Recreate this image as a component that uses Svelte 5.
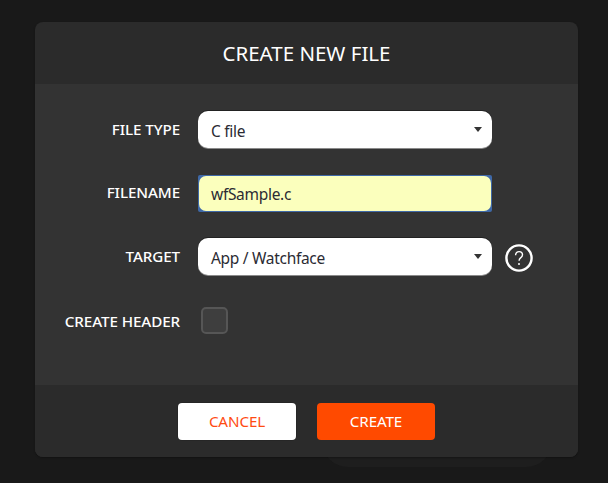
<script>
  const fileType = 'C file';
  const target = 'App / Watchface';
</script>

<div class="page">
  <div class="behind"></div>
  <div class="modal">
    <header class="head">CREATE NEW FILE</header>
    <div class="body">
      <div class="row">
        <span class="label">FILE TYPE</span>
        <div class="field select"><span>{fileType}</span><i class="caret"></i></div>
      </div>
      <div class="row">
        <span class="label">FILENAME</span>
        <div class="focus"><div class="field inner"><span>wfSample.c</span></div></div>
      </div>
      <div class="row">
        <span class="label">TARGET</span>
        <div class="field select"><span>{target}</span><i class="caret"></i></div>
        <svg class="help" width="28" height="28" viewBox="0 0 28 28" aria-hidden="true">
          <circle cx="14" cy="14" r="12.6" fill="none" stroke="#fff" stroke-width="2.4" />
          <path d="M10.6 11.2c0-2.2 1.5-3.6 3.5-3.6s3.4 1.3 3.4 3.2c0 1.5-.8 2.3-1.9 3.1-1 .8-1.5 1.4-1.5 2.8" fill="none" stroke="#fff" stroke-width="1.4" />
          <circle cx="14" cy="20" r="1" fill="#fff" />
        </svg>
      </div>
      <div class="row check-row">
        <span class="label">CREATE HEADER</span>
        <div class="check"></div>
      </div>
    </div>
    <footer class="foot">
      <button class="btn cancel">CANCEL</button>
      <button class="btn create">CREATE</button>
    </footer>
  </div>
</div>

<style>
  :global(body) {
    margin: 0;
    background: #191919;
  }
  .page {
    position: relative;
    width: 608px;
    height: 483px;
    overflow: hidden;
    padding: 22px 30px 0 35px;
    box-sizing: border-box;
    font-family: "Noto Sans", "Open Sans", sans-serif;
    background: #191919;
  }
  .behind {
    position: absolute;
    left: 322px;
    top: 440px;
    width: 230px;
    height: 27px;
    border-radius: 0 0 26px 26px;
    background: #1e1e1e;
  }
  .modal {
    position: relative;
    width: 543px;
    height: 435px;
    border-radius: 8px;
    overflow: hidden;
    display: flex;
    flex-direction: column;
    background: #2b2b2b;
    box-shadow: 0 1px 2px rgba(0, 0, 0, 0.3);
  }
  .head {
    height: 62px;
    display: flex;
    align-items: center;
    justify-content: center;
    color: #fff;
    font-size: 20.5px;
    letter-spacing: 0;
  }
  .body {
    flex: 1;
    background: #333;
    padding: 27px 0 0;
    display: flex;
    flex-direction: column;
    gap: 26.5px;
  }
  .row {
    display: flex;
    align-items: center;
    height: 37px;
  }
  .label {
    width: 145px;
    text-align: right;
    color: #fff;
    font-size: 15.2px;
    font-weight: 500;
    letter-spacing: -0.1px;
    margin-right: 18px;
    position: relative;
    top: -1px;
  }
  .field {
    width: 294px;
    height: 37px;
    box-sizing: border-box;
    border-radius: 10px;
    background: #fff;
    color: #2b2b33;
    font-size: 15.5px;
    letter-spacing: -0.3px;
    padding: 2px 13px 0;
    display: flex;
    align-items: center;
    justify-content: space-between;
    box-shadow: 0 -1px 0 #222, 0 1px 0 #8a8a8a;
  }
  .focus {
    width: 294px;
    height: 37px;
    box-sizing: border-box;
    padding: 1px;
    background: #3f69a8;
    border-radius: 2px;
  }
  .inner {
    width: 100%;
    height: 100%;
    background: #fbffbd;
    border-radius: 7px;
    padding-left: 12px;
    box-shadow: none;
  }
  .caret {
    width: 0;
    height: 0;
    border-left: 4px solid transparent;
    border-right: 4px solid transparent;
    border-top: 5px solid #333;
    margin-right: -3px;
    margin-top: -3px;
  }
  .help {
    margin-left: 12.5px;
    margin-top: 2px;
  }
  .check {
    width: 27px;
    height: 27px;
    box-sizing: border-box;
    margin-left: 3px;
    border: 2px solid #565656;
    border-radius: 5px;
    background: #3e3e3e;
  }
  .check-row .label {
    top: 1px;
  }
  .foot {
    height: 72px;
    display: flex;
    gap: 21px;
    padding: 18px 0 0 143px;
    box-sizing: border-box;
    background: #2b2b2b;
  }
  .btn {
    width: 118px;
    height: 37px;
    border: none;
    border-radius: 4px;
    font-family: inherit;
    font-size: 15.2px;
    letter-spacing: -0.1px;
    padding: 0 0 1px;
  }
  .cancel {
    background: #fff;
    color: #ff4b12;
    box-shadow: 0 0 0 0.5px #222;
  }
  .create {
    background: #ff4a00;
    color: #fff;
  }
</style>
